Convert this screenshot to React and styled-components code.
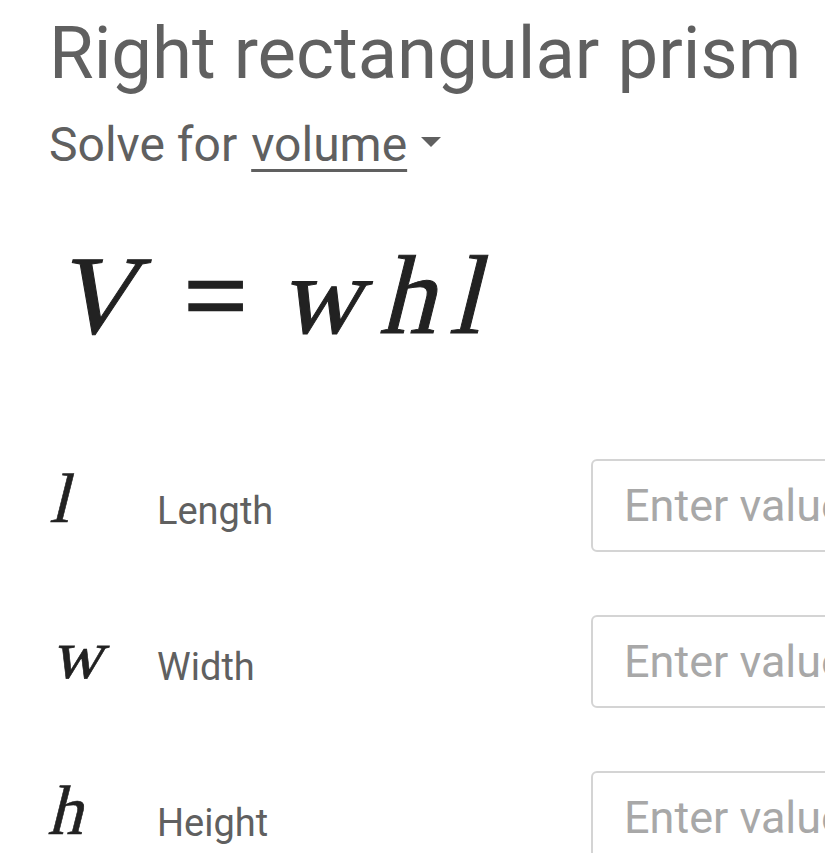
import React from "react";
import styled, { createGlobalStyle } from "styled-components";

const GlobalStyle = createGlobalStyle`
  body {
    margin: 0;
    background: #fff;
    overflow: hidden;
  }
`;

const Page = styled.section`
  width: 825px;
  height: 853px;
  overflow: hidden;
  padding-left: 49px;
  box-sizing: border-box;
  font-family: Roboto, "Open Sans", sans-serif;
`;

const Title = styled.h1`
  margin: 0;
  padding-top: 12px;
  font-size: 72.5px;
  font-weight: 400;
  line-height: 84px;
  color: #606060;
  white-space: nowrap;
`;

const SolveFor = styled.div`
  display: flex;
  align-items: center;
  margin-top: 17px;
  font-size: 48px;
  line-height: 64px;
  color: #606060;
`;

const Choice = styled.span`
  margin-left: 14px;
  text-decoration: underline;
  text-decoration-thickness: 3px;
  text-underline-offset: 8px;
`;

const Caret = styled.span`
  width: 0;
  height: 0;
  margin-left: 14px;
  margin-top: -6px;
  border-left: 10px solid transparent;
  border-right: 10px solid transparent;
  border-top: 10px solid #606060;
`;

const Formula = styled.div`
  display: flex;
  align-items: baseline;
  margin-top: 56px;
  margin-left: 14px;
  font-family: "Liberation Serif", "Times New Roman", serif;
  font-size: 112px;
  line-height: 124px;
  color: #222;
  -webkit-text-stroke: 1px #222;
`;

/* math letters are slanted roman glyphs, not a true italic face */
const Var = styled.span`
  display: inline-block;
  transform: skewX(-14deg);
  margin-right: ${(p) => p.gap || 0}px;
`;

const Eq = styled.span`
  margin: 0 42px 0 40px;
  -webkit-text-stroke: 2.5px #222;
`;

const Rows = styled.div`
  display: flex;
  flex-direction: column;
  gap: 63px;
  margin-top: 102px;
`;

const Row = styled.div`
  display: flex;
  align-items: center;
  height: 93px;
`;

const Symbol = styled.span`
  flex: none;
  width: 108px;
  padding-left: ${(p) => p.indent || 0}px;
  box-sizing: border-box;
  margin-top: -14px;
  font-family: "Liberation Serif", "Times New Roman", serif;
  font-size: 70px;
  color: #222;
  -webkit-text-stroke: 0.6px #222;
`;

const SymbolGlyph = styled.span`
  display: inline-block;
  transform: skewX(-14deg);
`;

const Label = styled.span`
  flex: none;
  width: 434px;
  font-size: 38px;
  color: #606060;
  margin-top: 10px;
`;

const Input = styled.input`
  flex: none;
  width: 320px;
  height: 93px;
  box-sizing: border-box;
  border: 2px solid #d4d4d4;
  border-radius: 6px;
  padding: 0 0 0 31px;
  font-family: Roboto, "Open Sans", sans-serif;
  font-size: 45px;
  color: #202124;
  outline: none;
  &::placeholder {
    color: #a8a8a8;
  }
`;

const fields = [
  { sym: "l", label: "Length", indent: 6 },
  { sym: "w", label: "Width", indent: 8 },
  { sym: "h", label: "Height", indent: 4 },
];

export default function App() {
  return (
    <>
      <GlobalStyle />
      <Page>
        <Title>Right rectangular prism</Title>
        <SolveFor>
          Solve for<Choice>volume</Choice>
          <Caret />
        </SolveFor>
        <Formula>
          <Var>V</Var>
          <Eq>=</Eq>
          <Var gap={18}>w</Var>
          <Var gap={14}>h</Var>
          <Var>l</Var>
        </Formula>
        <Rows>
          {fields.map((f) => (
            <Row key={f.label}>
              <Symbol indent={f.indent}>
                <SymbolGlyph>{f.sym}</SymbolGlyph>
              </Symbol>
              <Label>{f.label}</Label>
              <Input placeholder="Enter value" />
            </Row>
          ))}
        </Rows>
      </Page>
    </>
  );
}
